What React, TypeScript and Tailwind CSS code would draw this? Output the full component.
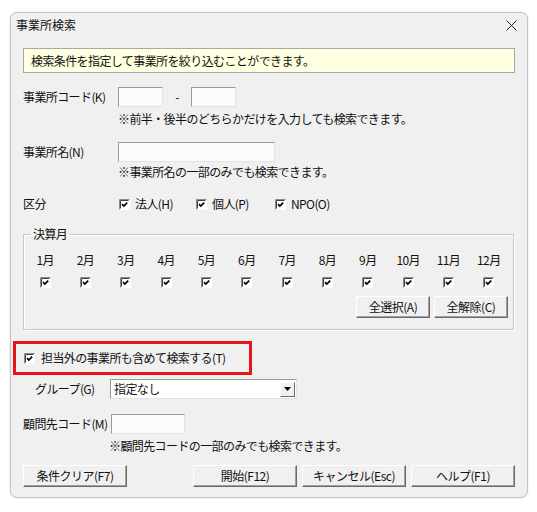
import React from 'react';

const months = ['1月', '2月', '3月', '4月', '5月', '6月', '7月', '8月', '9月', '10月', '11月', '12月'];

function CheckBox() {
  return (
    <svg width="11" height="11" viewBox="0 0 11 11" className="shrink-0">
      <rect x="0" y="0" width="11" height="11" fill="#ffffff" />
      <path d="M0.5 10.5V0.5H10.5" stroke="#8a8a8a" fill="none" />
      <path d="M1.5 9.5V1.5H9.5" stroke="#404040" fill="none" />
      <path d="M3 5.2l1.8 1.9L8.2 3.6" stroke="#000000" strokeWidth="1.7" fill="none" />
    </svg>
  );
}

function TextBox({ className }: { className: string }) {
  return (
    <input
      type="text"
      readOnly
      className={`h-[20px] bg-[#fbfbfb] border border-t-[#9a9a9a] border-l-[#9a9a9a] border-r-[#e3e3e3] border-b-[#e3e3e3] outline-none ${className}`}
    />
  );
}

function Btn({ label, className }: { label: string; className: string }) {
  return (
    <button
      type="button"
      className={`h-[22px] bg-[#f0f0f0] border border-t-white border-l-white border-r-[#6a6a6a] border-b-[#6a6a6a] shadow-[inset_-1px_-1px_0_#a0a0a0] text-[12px] leading-none tracking-[-0.5px] ${className}`}
    >
      {label}
    </button>
  );
}

function CloseIcon() {
  return (
    <svg width="11" height="11" viewBox="0 0 11 11">
      <path d="M0.5 0.5l10 10M10.5 0.5l-10 10" stroke="#222222" strokeWidth="1" fill="none" />
    </svg>
  );
}

export default function App() {
  return (
    <div className="w-[537px] h-[512px] bg-white font-['Noto_Sans_CJK_JP',sans-serif] text-[12px] text-[#111] leading-none tracking-[-0.6px] whitespace-nowrap">
      <div className="relative left-[10px] top-[12px] w-[518px] h-[486px] rounded-[7px] border border-[#c4c4c4] bg-[#f0f0f0] shadow-[0_0_2px_rgba(0,0,0,0.15)]">
        {/* title bar */}
        <div className="h-[24px] flex items-center justify-between pl-[5px] pr-[10px]">
          <span className="tracking-normal">事業所検索</span>
          <CloseIcon />
        </div>

        <div className="px-[12px]">
          {/* info */}
          <div className="mt-[11px] h-[25px] flex items-center pl-[7px] bg-[#ffffe1] border border-[#a8a8a8]">
            検索条件を指定して事業所を絞り込むことができます。
          </div>

          {/* 事業所コード */}
          <div className="mt-[14px] h-[20px] flex items-center">
            <span className="w-[95px]">事業所コード(K)</span>
            <TextBox className="w-[45px]" />
            <span className="w-[28px] text-center">-</span>
            <TextBox className="w-[45px]" />
          </div>
          <div className="mt-[4px] h-[16px] flex items-center pl-[95px]">
            ※前半・後半のどちらかだけを入力しても検索できます。
          </div>

          {/* 事業所名 */}
          <div className="mt-[15px] h-[20px] flex items-center">
            <span className="w-[95px]">事業所名(N)</span>
            <TextBox className="w-[157px]" />
          </div>
          <div className="mt-[2px] h-[16px] flex items-center pl-[95px]">
            ※事業所名の一部のみでも検索できます。
          </div>

          {/* 区分 */}
          <div className="mt-[16px] h-[16px] flex items-center">
            <span className="w-[96px]">区分</span>
            <div className="w-[77px] flex items-center gap-[5px]">
              <CheckBox />
              <span>法人(H)</span>
            </div>
            <div className="w-[79px] flex items-center gap-[5px]">
              <CheckBox />
              <span>個人(P)</span>
            </div>
            <div className="flex items-center gap-[5px]">
              <CheckBox />
              <span>NPO(O)</span>
            </div>
          </div>

          {/* 決算月 */}
          <fieldset className="mt-[14px] w-[491px] h-[104px] border border-[#c8c8c8] shadow-[inset_1px_1px_0_#ffffff,1px_1px_0_#ffffff]">
            <legend className="ml-[7px] px-[2px] text-[12px] leading-[16px]">決算月</legend>
            <div className="ml-[1px] w-[484px] grid grid-cols-12 mt-[10px]">
              {months.map((m) => (
                <div key={m} className="h-[16px] flex items-center justify-center">
                  {m}
                </div>
              ))}
            </div>
            <div className="ml-[1px] w-[484px] grid grid-cols-12 mt-[9px]">
              {months.map((m) => (
                <div key={m} className="h-[11px] flex items-center justify-center">
                  <CheckBox />
                </div>
              ))}
            </div>
            <div className="mt-[8px] flex justify-end gap-[4px] pr-[5px]">
              <Btn label="全選択(A)" className="w-[74px]" />
              <Btn label="全解除(C)" className="w-[74px]" />
            </div>
          </fieldset>

          {/* 担当外 */}
          <div className="mt-[11px] -ml-[10px] w-[239px] h-[34px] border-[3px] border-[#e8141c] flex items-center pl-[8px] gap-[6px]">
            <CheckBox />
            <span>担当外の事業所も含めて検索する(T)</span>
          </div>

          {/* グループ */}
          <div className="mt-[4px] h-[20px] flex items-center">
            <span className="w-[87px] pl-[12px]">グループ(G)</span>
            <div className="w-[187px] h-[20px] flex items-center bg-white border border-t-[#9a9a9a] border-l-[#9a9a9a] border-r-[#e3e3e3] border-b-[#e3e3e3]">
              <span className="flex-1 pl-[3px]">指定なし</span>
              <div className="w-[15px] h-[15px] mr-[1px] flex items-center justify-center bg-[#f0f0f0] border border-t-white border-l-white border-r-[#6a6a6a] border-b-[#6a6a6a]">
                <svg width="7" height="4" viewBox="0 0 7 4">
                  <path d="M0 0h7L3.5 4z" fill="#000000" />
                </svg>
              </div>
            </div>
          </div>

          {/* 顧問先コード */}
          <div className="mt-[15px] h-[20px] flex items-center">
            <span className="w-[88px]">顧問先コード(M)</span>
            <TextBox className="w-[74px]" />
          </div>
          <div className="mt-[4px] h-[16px] flex items-center pl-[86px]">
            ※顧問先コードの一部のみでも検索できます。
          </div>

          {/* buttons */}
          <div className="mt-[11px] flex items-center">
            <Btn label="条件クリア(F7)" className="w-[104px]" />
            <div className="flex-1" />
            <div className="flex gap-[5px]">
              <Btn label="開始(F12)" className="w-[104px]" />
              <Btn label="キャンセル(Esc)" className="w-[104px]" />
              <Btn label="ヘルプ(F1)" className="w-[104px]" />
            </div>
          </div>
        </div>
      </div>
    </div>
  );
}
